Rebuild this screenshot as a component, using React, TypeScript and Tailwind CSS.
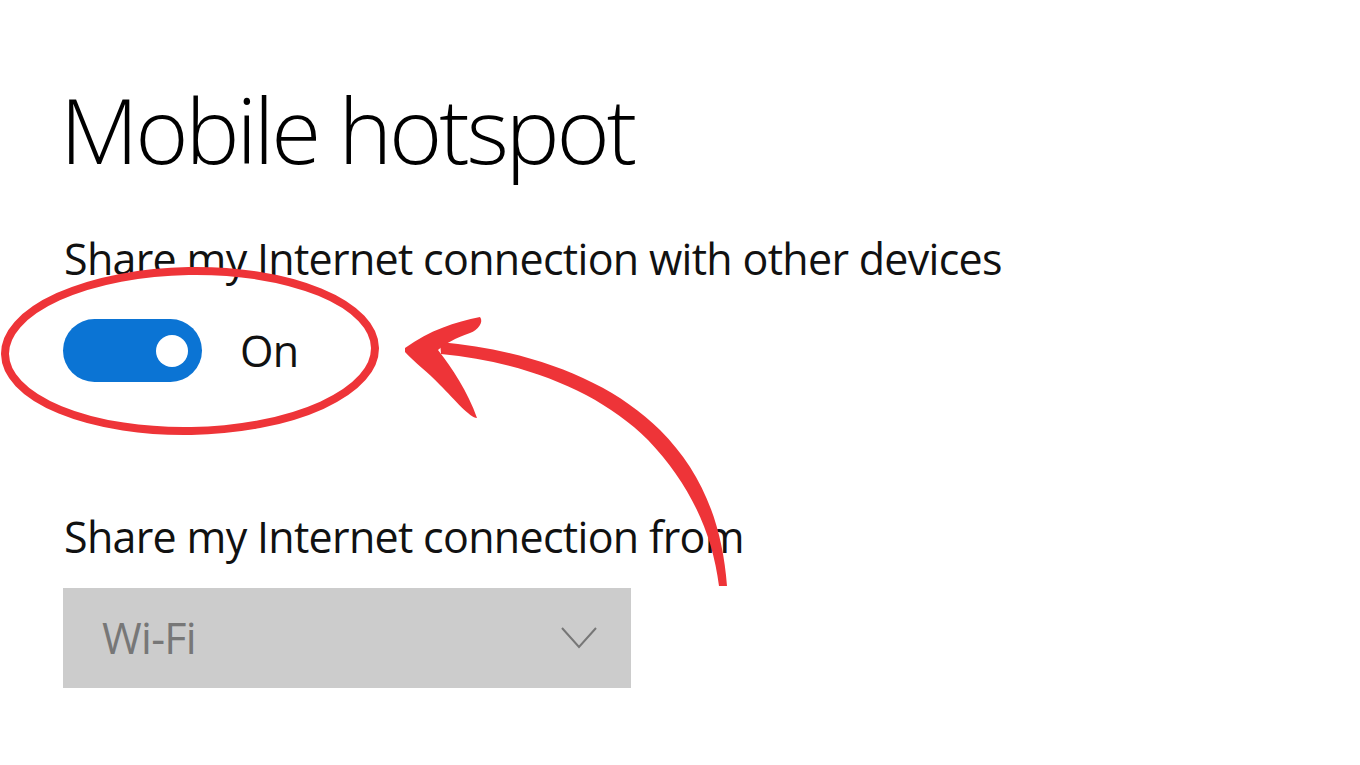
export default function App() {
  return (
    <div
      className="relative w-[1360px] h-[765px] overflow-hidden bg-white text-[#111]"
      style={{ fontFamily: '"Open Sans", "Noto Sans", sans-serif' }}
    >
      <div className="flex flex-col items-start pl-[60px] pt-[84px]">
        <h1 className="text-[91px] leading-[91px] font-light tracking-[-3.2px] text-black">Mobile hotspot</h1>

        <p className="mt-[62px] pl-[4px] text-[43px] leading-[44px] tracking-[-0.7px]">
          Share my Internet connection with other devices
        </p>

        <div className="mt-[38px] pl-[3px] flex items-center gap-[38px]">
          <div className="w-[139px] h-[63px] rounded-full bg-[#0b74d4] flex items-center justify-end pr-[14px]">
            <div className="w-[32px] h-[32px] rounded-full bg-white" />
          </div>
          <span className="text-[43px] leading-[44px] tracking-[-0.7px]">On</span>
        </div>

        <p className="mt-[133px] pl-[4px] text-[43px] leading-[44px] tracking-[-0.7px]">
          Share my Internet connection from
        </p>

        <div className="mt-[29px] ml-[3px] w-[568px] h-[100px] bg-[#cccccc] flex items-center justify-between pl-[39px] pr-[34px]">
          <span className="text-[43px] leading-[44px] tracking-[-0.7px] text-[#777]">Wi-Fi</span>
          <svg width="36" height="22" viewBox="0 0 36 22" fill="none">
            <path d="M1 1 L18 20 L35 1" stroke="#777" strokeWidth="2" />
          </svg>
        </div>
      </div>

      {/* red annotation */}
      <svg className="absolute inset-0 pointer-events-none" width="1360" height="765" viewBox="0 0 1360 765">
        <ellipse cx="190" cy="351" rx="185" ry="80" fill="none" stroke="#ee3438" strokeWidth="8" transform="rotate(-1 190 351)" />
        <path
          d="M727 586 C 722 520, 700 470, 660 430 C 610 380, 530 350, 440 342 L 441 354 C 525 362, 600 392, 648 440 C 688 482, 712 530, 719 586 Z"
          fill="#ee3438"
        />
        <path
          d="M405 348 C 430 330, 455 322, 480 317 C 484 322, 478 330, 470 333 C 455 338, 445 344, 438 350 C 452 368, 468 392, 477 418 C 470 418, 455 400, 440 385 C 428 372, 414 362, 405 352 Z"
          fill="#ee3438"
        />
      </svg>
    </div>
  );
}
